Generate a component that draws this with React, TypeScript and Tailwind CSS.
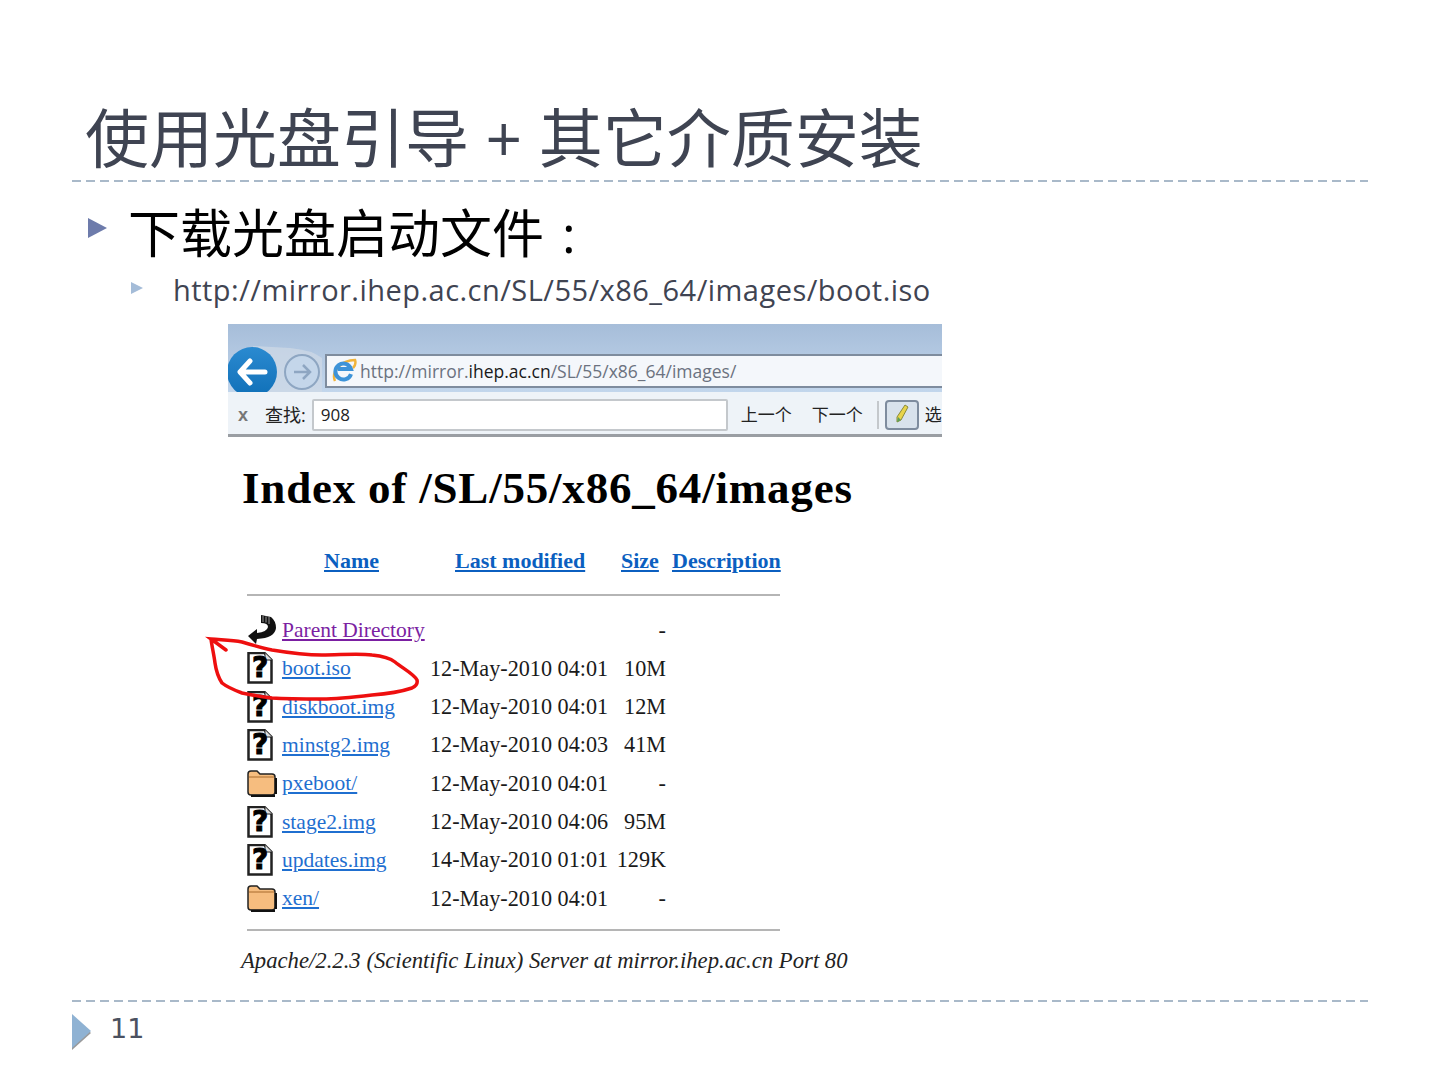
const dashes =
  "h-[2px] mx-[72px] bg-[repeating-linear-gradient(90deg,#a9b9c9_0_9px,transparent_9px_14px)]";

const rows = [
  { icon: "parent", name: "Parent Directory", date: "", size: "-" },
  { icon: "file", name: "boot.iso", date: "12-May-2010 04:01", size: "10M" },
  { icon: "file", name: "diskboot.img", date: "12-May-2010 04:01", size: "12M" },
  { icon: "file", name: "minstg2.img", date: "12-May-2010 04:03", size: "41M" },
  { icon: "folder", name: "pxeboot/", date: "12-May-2010 04:01", size: "-" },
  { icon: "file", name: "stage2.img", date: "12-May-2010 04:06", size: "95M" },
  { icon: "file", name: "updates.img", date: "14-May-2010 01:01", size: "129K" },
  { icon: "folder", name: "xen/", date: "12-May-2010 04:01", size: "-" },
];

const RowIcon = ({ type }: { type: string }) => {
  if (type === "parent") {
    return (
      <svg width="30" height="32" viewBox="0 0 30 32">
        <path d="M14 1 24 3Q29 7 29 14Q28 24 10 25L9 30 1 22 10 15 10 19Q20 18 21 13Q21 9 14 9Z" fill="#111" />
        <path d="M16 2v6M19 2.500v6M22 3v7" stroke="#999" strokeWidth="1" />
      </svg>
    );
  }
  if (type === "folder") {
    return (
      <svg width="30" height="28" viewBox="0 0 30 28">
        <path d="M1 5q0-3 3-3h6l3 3h12q3 0 3 3v15q0 3-3 3H4q-3 0-3-3z" fill="#f6bd7f" stroke="#222" strokeWidth="1.500" />
        <path d="M2 8h25" stroke="#a86a2c" strokeWidth="1" />
        <path d="M29 9v16M4 27h24" stroke="#111" strokeWidth="2.500" />
      </svg>
    );
  }
  return (
    <div className="relative w-[26px] h-[32px]">
      <svg width="26" height="32" viewBox="0 0 26 32" className="absolute inset-0">
        <path d="M1.500 1h16l7 7v22.500h-23z" fill="#fff" stroke="#222" strokeWidth="2.500" />
        <path d="M18 1v7h7" fill="#ddd" stroke="#222" strokeWidth="1" />
      </svg>
      <span className="absolute inset-0 flex items-center justify-center text-[28px] leading-[32px] font-bold text-black [-webkit-text-stroke:1px_black] font-['DejaVu_Sans',sans-serif]">
        ?
      </span>
    </div>
  );
};

export default function App() {
  return (
    <div className="relative w-[1440px] h-[1080px] overflow-hidden bg-white font-['Open_Sans','Noto_Sans_CJK_SC',sans-serif]">
      <div className="h-[180px] pl-[85px] flex items-end">
        <h1 className="text-[64px] leading-[84px] font-normal text-[#3f4452] whitespace-nowrap">
          使用光盘引导 + 其它介质安装
        </h1>
      </div>
      <div className={dashes}></div>

      <div className="pt-[21px] pl-[88px] flex items-center h-[81px]">
        <span className="w-0 h-0 mr-[21px] mb-[10px] border-y-[10px] border-y-transparent border-l-[19px] border-l-[#6d7bab]"></span>
        <p className="text-[52px] leading-[60px] text-black whitespace-nowrap">
          下载光盘启动文件<span className="ml-[18px]">:</span>
        </p>
      </div>

      <div className="mt-[10px] pl-[131px] flex items-center h-[36px]">
        <span className="w-0 h-0 mr-[30px] mb-[6px] border-y-[6px] border-y-transparent border-l-[12px] border-l-[#a4bcd8]"></span>
        <p className="text-[29px] leading-[36px] tracking-[0.47px] pb-[2px] text-[#3f4452] whitespace-nowrap">
          http://mirror.ihep.ac.cn/SL/55/x86_64/images/boot.iso
        </p>
      </div>

      <div className="mt-[15px] ml-[228px] w-[714px]">
        {/* browser chrome */}
        <div className="relative h-[68px] overflow-hidden bg-gradient-to-b from-[#a6bdd9] to-[#c2d6ec] flex items-end">
          <svg className="absolute left-0 top-0" width="100" height="68" viewBox="0 0 100 68">
            <path d="M25 22 62 24Q84 26 94 34L94 68 25 68Z" fill="#cdd8e5" fillOpacity="0.75" />
          </svg>
          <div className="relative w-[50px] h-[50px] -ml-[1px] -mb-[5px] shrink-0 rounded-full bg-gradient-to-b from-[#2a8ad0] to-[#0f70b8] flex items-center justify-center">
            <svg width="32" height="28" viewBox="0 0 32 28">
              <path d="M14 3 4 14l10 11M5 14h24" fill="none" stroke="#fff" strokeWidth="5" strokeLinecap="round" strokeLinejoin="round" />
            </svg>
          </div>
          <div className="relative w-[36px] h-[36px] ml-[7px] mb-[2px] shrink-0 rounded-full border-2 border-[#8ea6c2] bg-[#c4d6ea] flex items-center justify-center">
            <svg width="22" height="20" viewBox="0 0 22 20">
              <path d="M12 3l7 7-7 7M3 10h15" fill="none" stroke="#8ea6c2" strokeWidth="2.500" />
            </svg>
          </div>
          <div className="relative ml-[5px] mb-[4px] h-[34px] flex-1 bg-[#f4f7fb] border-2 border-r-0 border-[#7e8c9e] flex items-center pl-[4px]">
            <svg width="26" height="26" viewBox="0 0 26 26" className="shrink-0">
              <path d="M4 23C0 14 10 2 24 2C25 5 24 8 22 10" fill="none" stroke="#f0b43c" strokeWidth="2.500" />
              <path d="M20 16a8 8 0 1 1 0-5H7" fill="none" stroke="#3d93d8" strokeWidth="4" />
            </svg>
            <span className="ml-[3px] text-[17.5px] text-[#6b7280] whitespace-nowrap">
              http://mirror.<span className="text-[#1a1a1a]">ihep.ac.cn</span>/SL/55/x86_64/images/
            </span>
          </div>
        </div>
        <div className="h-[45px] pt-[4px] bg-[#eef3f8] border-b-[3px] border-[#9a9ea3] flex items-center overflow-hidden">
          <span className="ml-[10px] text-[18px] font-bold text-[#777] font-['Liberation_Sans',sans-serif]">x</span>
          <span className="ml-[17px] text-[18px] text-[#222] whitespace-nowrap">查找:</span>
          <div className="ml-[6px] w-[416px] h-[32px] bg-white border-2 border-[#c4c8cc] rounded-[2px] flex items-center pl-[7px] text-[17px] text-[#222] shrink-0">
            908
          </div>
          <span className="ml-[13px] text-[17px] text-[#222] whitespace-nowrap">上一个</span>
          <span className="ml-[20px] text-[17px] text-[#222] whitespace-nowrap">下一个</span>
          <span className="ml-[14px] w-[2px] h-[28px] bg-[#c4c8cc] shrink-0"></span>
          <div className="ml-[6px] w-[34px] h-[30px] shrink-0 rounded-[4px] border-2 border-[#7e8c9e] bg-[#d8e2ec] flex items-center justify-center">
            <svg width="16" height="24" viewBox="0 0 16 24">
              <path d="M11 2l3 2-7 13-4 2 0-5z" fill="#e8d44a" stroke="#8a8a3a" />
              <path d="M3 19l4-2-3-3z" fill="#5aa05a" />
            </svg>
          </div>
          <span className="ml-[6px] text-[17px] text-[#222] whitespace-nowrap">选</span>
        </div>

        {/* apache listing */}
        <h2 className="mt-[26px] pl-[14px] text-[45px] leading-[50px] font-bold tracking-[0.8px] text-black whitespace-nowrap font-['Liberation_Serif',serif]">
          Index of /SL/55/x86_64/images
        </h2>

        <div className="mt-[32px] pl-[96px] flex h-[30px] items-center text-[22px] font-bold text-[#0b5fc0] underline whitespace-nowrap font-['Liberation_Serif',serif]">
          <span className="w-[131px]">Name</span>
          <span className="w-[166px]">Last modified</span>
          <span className="w-[51px]">Size</span>
          <span>Description</span>
        </div>
        <div className="mt-[19px] ml-[19px] w-[533px] h-[2px] bg-[#b5b5b5]"></div>

        <div className="mt-[15px] pl-[19px] font-['Liberation_Serif',serif] text-[22.2px] text-[#1a1a1a]">
          {rows.map((row) => (
            <div key={row.name} className="flex items-center h-[38.3px] whitespace-nowrap">
              <div className="w-[35px] shrink-0">
                <RowIcon type={row.icon} />
              </div>
              <span
                className={
                  row.icon === "parent"
                    ? "w-[148px] shrink-0 underline text-[21.5px] text-[#7b1fa2]"
                    : "w-[148px] shrink-0 underline text-[21.5px] text-[#1f6fd0]"
                }
              >
                {row.name}
              </span>
              <span className="w-[178px] shrink-0">{row.date}</span>
              <span className="w-[58px] shrink-0 text-right">{row.size}</span>
            </div>
          ))}
        </div>
        <div className="mt-[12px] ml-[19px] w-[533px] h-[2px] bg-[#b5b5b5]"></div>
        <p className="mt-[15px] pl-[13px] text-[22.7px] leading-[30px] italic text-[#222] whitespace-nowrap font-['Liberation_Serif',serif]">
          Apache/2.2.3 (Scientific Linux) Server at mirror.ihep.ac.cn Port 80
        </p>
      </div>

      <div className={`mt-[24px] ${dashes}`}></div>
      <div className="mt-[10px] pl-[72px] flex items-center">
        <span className="w-0 h-0 border-y-[17px] border-y-transparent border-l-[19px] border-l-[#8fb2d3] drop-shadow-[0_2px_0_#9a9a9a]"></span>
        <span className="ml-[19px] pb-[3px] text-[27px] leading-[34px] text-[#4b5160] font-['DejaVu_Sans',sans-serif]">11</span>
      </div>

      {/* red pen mark over the screenshot */}
      <svg className="absolute left-[205px] top-[630px]" width="220" height="80" viewBox="205 630 220 80">
        <path
          d="M226 650 211 639C222 640 232 640 242 642C252 645 262 648 272 650C290 653 305 655 322 655C340 655 358 653 372 655C382 656 390 658 395 662C402 668 414 674 417 680C418 684 416 686 412 688C400 692 386 694 372 695C355 697 338 699 322 699C305 699 288 699 272 698C262 697 252 695 242 693C234 690 227 687 222 683C218 677 216 670 215 663C214 655 212 647 211 639"
          fill="none"
          stroke="#ee0f0f"
          strokeWidth="3.500"
          strokeLinecap="round"
        />
      </svg>
    </div>
  );
}
